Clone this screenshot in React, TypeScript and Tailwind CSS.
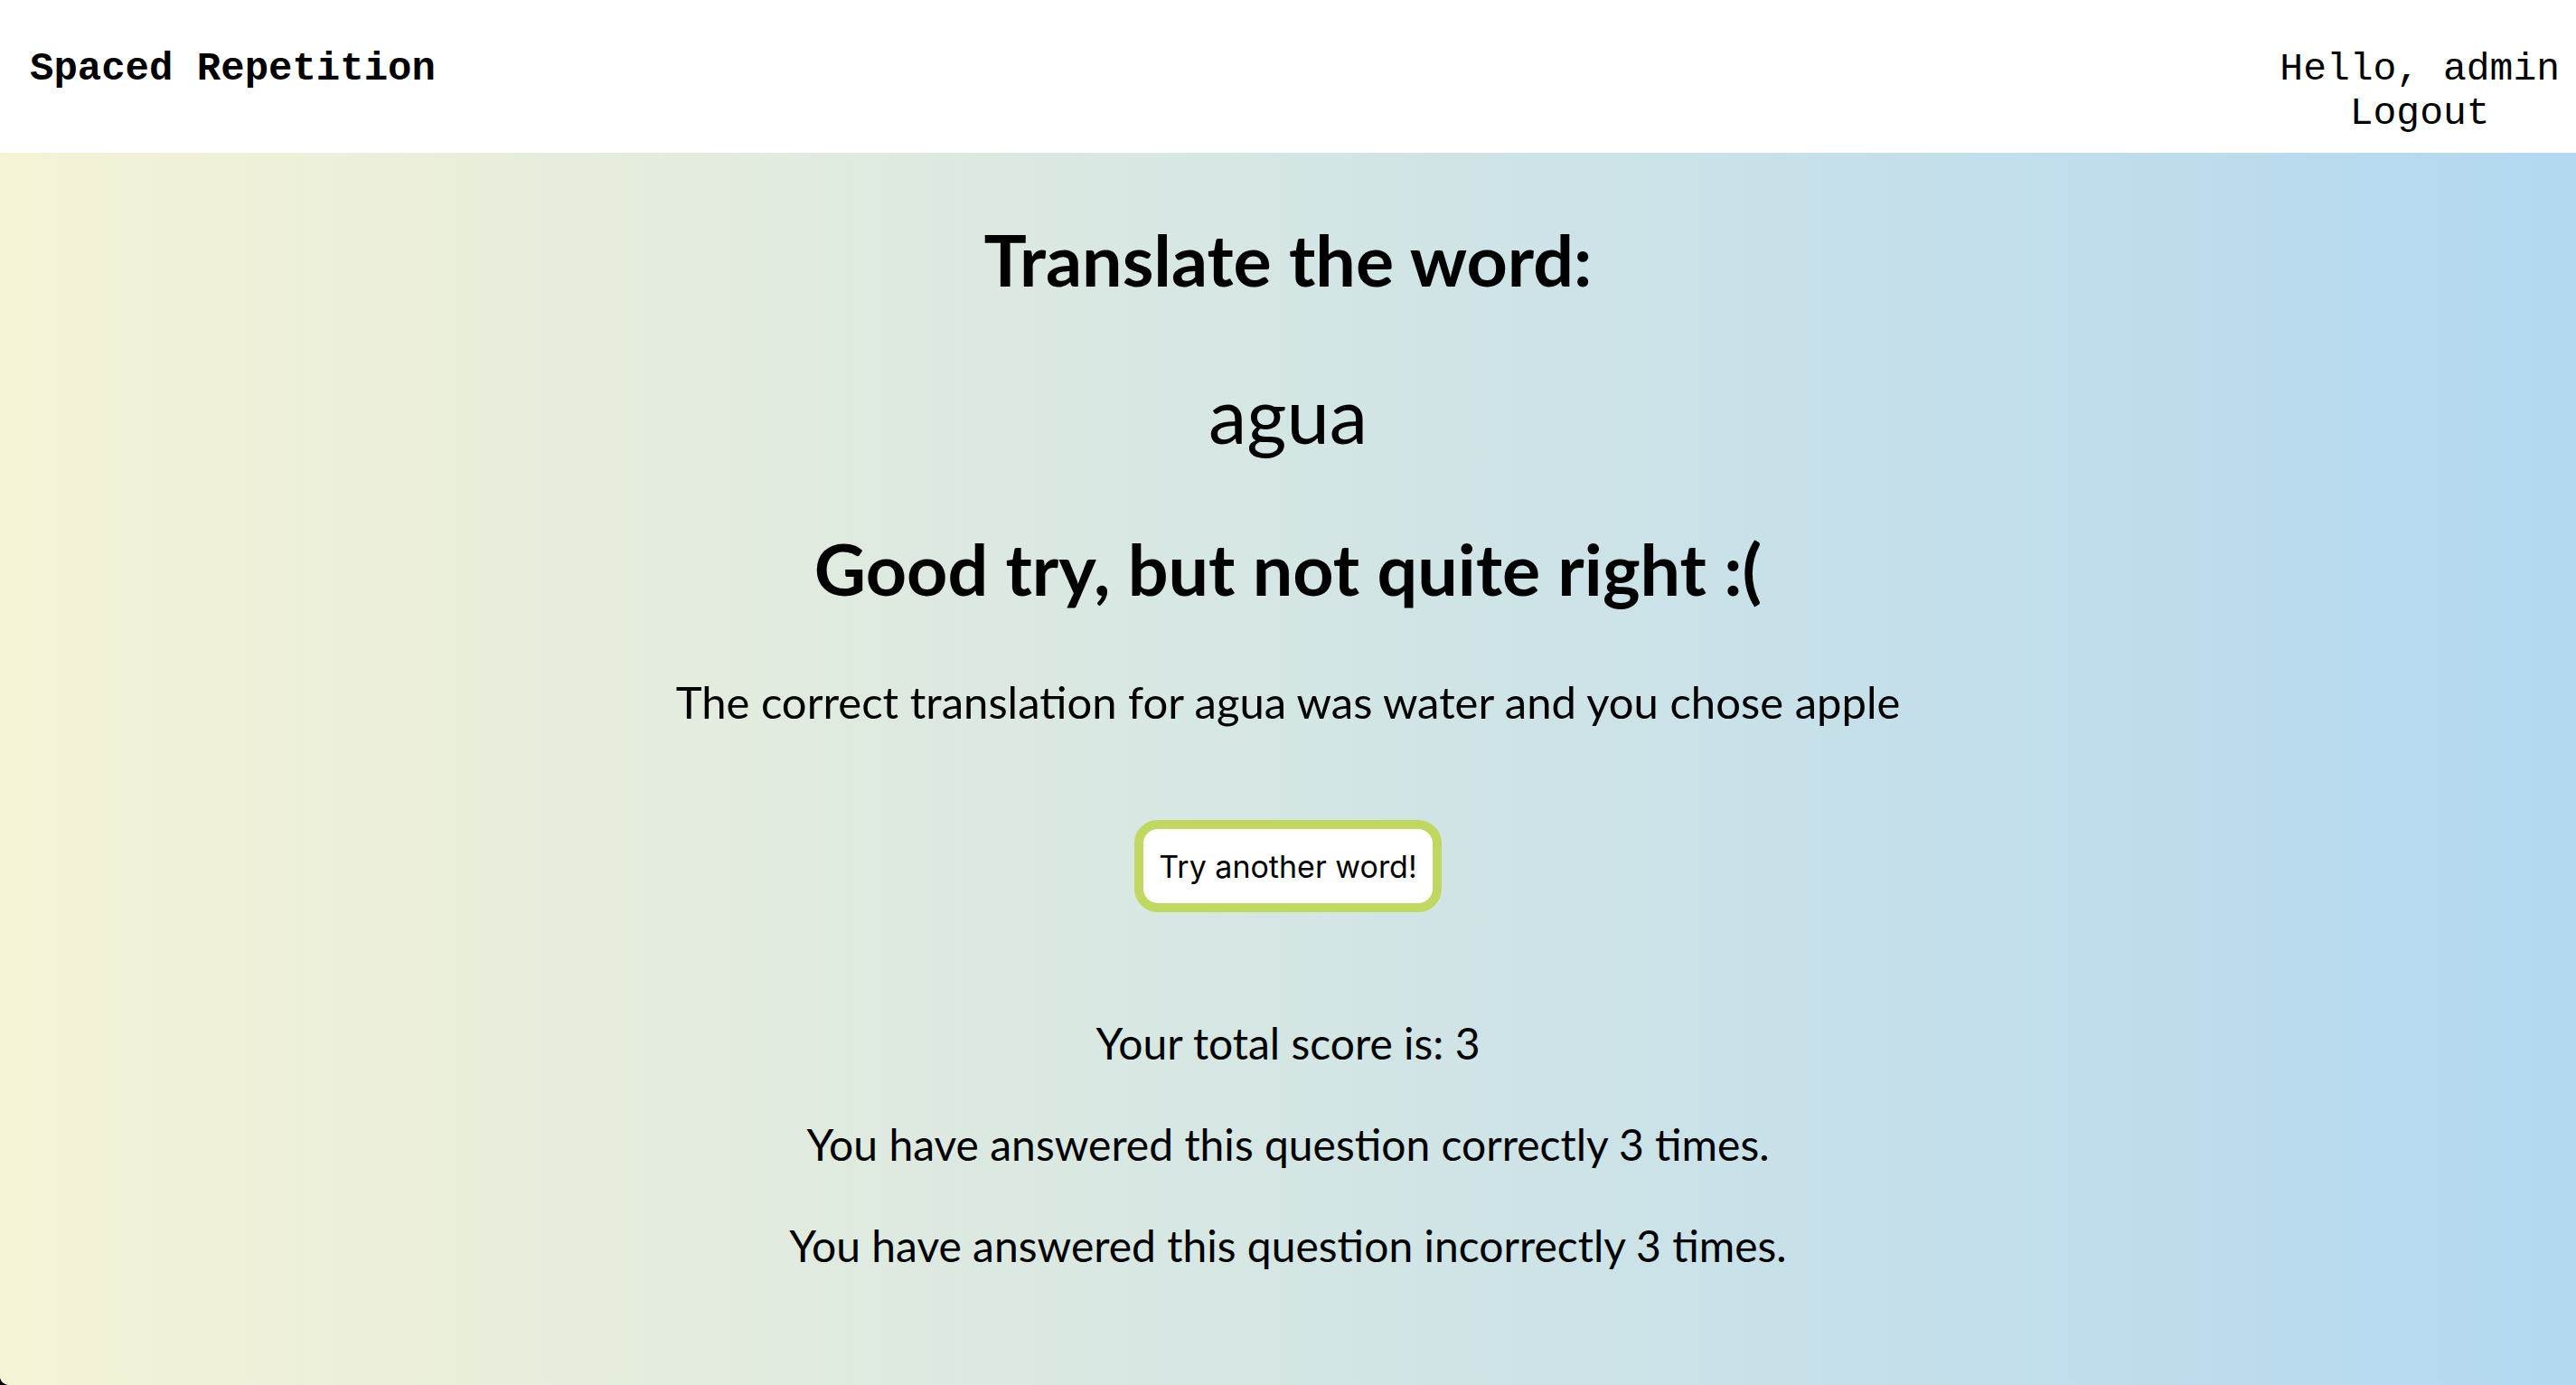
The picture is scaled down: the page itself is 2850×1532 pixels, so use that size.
import React from 'react';

const body = { fontFamily: 'Lato, "Open Sans", sans-serif' };
const mono = { fontFamily: '"Liberation Mono", "DejaVu Sans Mono", monospace' };

function Header() {
  return (
    <header className="flex h-[169px] items-start justify-between bg-white pl-[33px] pr-[18px] pt-[52px]" style={mono}>
      <div className="text-[44px] font-bold leading-[49px] text-black">Spaced Repetition</div>
      <div className="flex flex-col items-center text-[43px] leading-[49px] text-black">
        <span>Hello, admin</span>
        <a href="#" className="text-black">Logout</a>
      </div>
    </header>
  );
}

export default function App() {
  const stats = [
    'Your total score is: 3',
    'You have answered this question correctly 3 times.',
    'You have answered this question incorrectly 3 times.',
  ];

  return (
    <div className="min-h-screen w-full bg-black">
      <div className="flex min-h-[1532px] flex-col overflow-hidden rounded-bl-[10px] bg-white">
        <Header />
        <main
          className="flex flex-1 flex-col items-center bg-gradient-to-r from-[#f5f3d6] to-[#b3d8f0] pt-[73px] text-black"
          style={body}
        >
          <h2 className="text-[79px] font-bold leading-[90px]">Translate the word:</h2>
          <p className="mt-[81px] text-[85px] leading-[90px]">agua</p>
          <h2 className="mt-[81px] text-[79px] font-bold leading-[90px]">Good try, but not quite right :(</h2>
          <p className="mt-[74px] text-[49px] leading-[56px]">
            The correct translation for agua was water and you chose apple
          </p>
          <button
            className="mt-[103px] flex h-[102px] w-[340px] items-center justify-center rounded-[26px] border-[10px] border-[#c0d762] bg-white text-[34px] text-black"
            style={{ fontFamily: 'Inter, "Liberation Sans", sans-serif' }}
          >
            Try another word!
          </button>
          <div className="mt-[117px] flex flex-col items-center gap-[56px]">
            {stats.map((s) => (
              <p key={s} className="text-[48px] leading-[56px]">
                {s}
              </p>
            ))}
          </div>
        </main>
      </div>
    </div>
  );
}
